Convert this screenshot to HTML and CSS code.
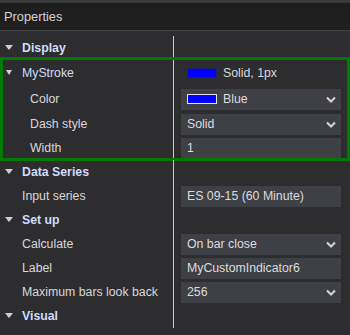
FILE: index.html
```html
<!DOCTYPE html>
<html lang="en">
<head>
  <meta charset="UTF-8">
  <title>Properties</title>
  <link rel="stylesheet" href="styles.css">
</head>
<body>
  <div class="panel">
    <div class="titlebar">Properties</div>

    <div class="grid">
      <div class="row cat">
        <div class="name"><span class="tri"></span>Display</div>
        <div class="val"></div>
      </div>

      <!-- linha destacada -->
      <div class="group">
        <div class="row tall sub">
          <div class="name"><span class="tri"></span>MyStroke</div>
          <div class="val plain"><span class="swatch"></span>Solid, 1px</div>
        </div>
        <div class="row tall">
          <div class="name ind">Color</div>
          <div class="val"><div class="field"><span class="swatch light"></span>Blue<svg class="chev" width="10" height="7" viewBox="0 0 10 7"><polyline points="1,1.5 5,5.5 9,1.5" /></svg></div></div>
        </div>
        <div class="row">
          <div class="name ind">Dash style</div>
          <div class="val"><div class="field">Solid<svg class="chev" width="10" height="7" viewBox="0 0 10 7"><polyline points="1,1.5 5,5.5 9,1.5" /></svg></div></div>
        </div>
        <div class="row">
          <div class="name ind">Width</div>
          <div class="val"><div class="field">1</div></div>
        </div>
      </div>

      <div class="row cat">
        <div class="name"><span class="tri"></span>Data Series</div>
        <div class="val"></div>
      </div>
      <div class="row">
        <div class="name">Input series</div>
        <div class="val"><div class="field">ES 09-15 (60 Minute)</div></div>
      </div>

      <div class="row cat">
        <div class="name"><span class="tri"></span>Set up</div>
        <div class="val"></div>
      </div>
      <div class="row">
        <div class="name">Calculate</div>
        <div class="val"><div class="field">On bar close<svg class="chev" width="10" height="7" viewBox="0 0 10 7"><polyline points="1,1.5 5,5.5 9,1.5" /></svg></div></div>
      </div>
      <div class="row">
        <div class="name">Label</div>
        <div class="val"><div class="field">MyCustomIndicator6</div></div>
      </div>
      <div class="row">
        <div class="name">Maximum bars look back</div>
        <div class="val"><div class="field">256<svg class="chev" width="10" height="7" viewBox="0 0 10 7"><polyline points="1,1.5 5,5.5 9,1.5" /></svg></div></div>
      </div>

      <div class="row cat">
        <div class="name"><span class="tri"></span>Visual</div>
        <div class="val"></div>
      </div>
    </div>
  </div>
</body>
</html>
```

FILE: styles.css
```css
* {
  box-sizing: border-box;
}
body {
  margin: 0;
  background: #2d2d30;
  font-family: "Liberation Sans", Arial, sans-serif;
  font-size: 12.3px;
  color: #d8d8d8;
}
.panel {
  width: 350px;
  height: 335px;
  overflow: hidden;
}
.titlebar {
  height: 31px;
  line-height: 27px;
  padding-left: 4px;
  font-size: 12.8px;
  color: #d4d4d4;
  background: #1e1e1e;
  border-top: 3px solid #3a3a3a;
  border-bottom: 1px solid #454545;
}
.grid {
  padding-top: 5px;
}
.row {
  display: flex;
  height: 24px;
}
.row.tall {
  height: 26px;
}
.name {
  width: 174px;
  flex: none;
  padding-left: 22px;
  border-right: 1px solid #c8c8c8;
  display: flex;
  align-items: center;
  white-space: nowrap;
}
.name.ind {
  padding-left: 30px;
}
.cat .name,
.sub .name {
  position: relative;
  color: #d0dcfa;
}
.cat .name {
  font-weight: bold;
}
.tri {
  position: absolute;
  left: 5px;
  top: 50%;
  margin-top: -3px;
  width: 0;
  height: 0;
  border-left: 4px solid transparent;
  border-right: 4px solid transparent;
  border-top: 5px solid #cfcfcf;
}
.sub .tri {
  left: 6px;
  border-left-width: 3.5px;
  border-right-width: 3.5px;
}
.val {
  flex: 1;
  padding: 0 9px 0 7px;
  display: flex;
  align-items: center;
}
.val.plain {
  padding-left: 13px;
}
.field {
  flex: 1;
  height: 21px;
  background: #3f3f46;
  padding-left: 6px;
  display: flex;
  align-items: center;
  position: relative;
  color: #dcdcdc;
}
.chev {
  position: absolute;
  right: 5px;
  top: 7px;
}
.chev polyline {
  fill: none;
  stroke: #d6d6d6;
  stroke-width: 2;
}
.swatch {
  width: 30px;
  height: 10px;
  background: #0000ff;
  border: 1px solid #20206a;
  margin-right: 6px;
}
.swatch.light {
  border-color: #e2e2e2;
}
.group {
  position: relative;
}
.group::after {
  content: "";
  position: absolute;
  left: 0;
  right: 0;
  top: -3px;
  bottom: -1px;
  border: 3px solid #007a00;
  pointer-events: none;
}
```
